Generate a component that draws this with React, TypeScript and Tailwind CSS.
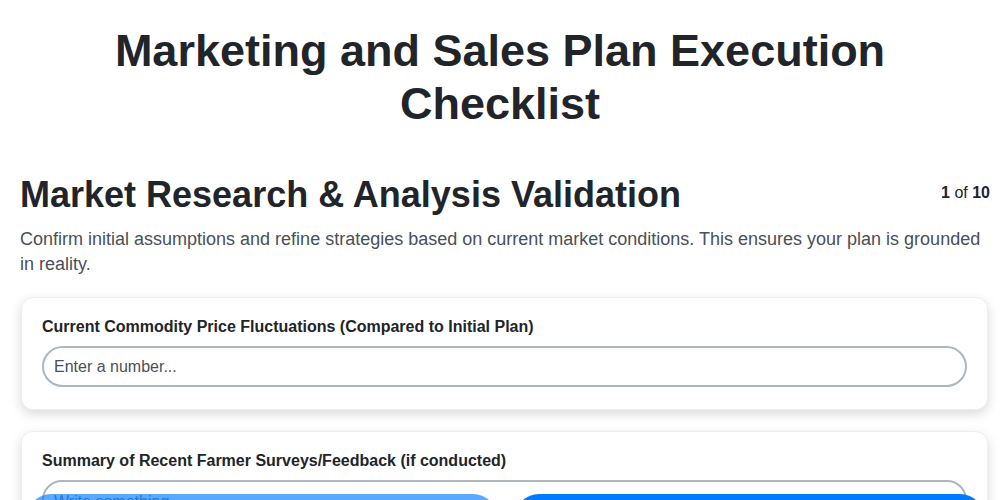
export default function App() {
  return (
    <div className="min-h-screen bg-white text-[#212529]" style={{ fontFamily: '"Liberation Sans", Arial, sans-serif' }}>
      <div className="pl-5 pr-[10px] pt-[24px] pb-24">
        <h1 className="mx-auto max-w-[800px] pr-[10px] text-center text-[45px] font-bold leading-[53px] text-[#212529]">
          Marketing and Sales Plan Execution Checklist
        </h1>

        <div className="mt-[43px] flex items-start justify-between">
          <h2 className="text-[36px] font-bold leading-[44px] text-[#212529]">Market Research &amp; Analysis Validation</h2>
          <div className="mt-[8px] text-[16px] text-[#212529]">
            <span className="font-bold">1</span> of <span className="font-bold">10</span>
          </div>
        </div>
        <p className="mt-[10px] text-[18px] leading-[25px] text-[#495057]">
          Confirm initial assumptions and refine strategies based on current market conditions. This ensures your plan is grounded in reality.
        </p>

        <div className="mt-[20px] mr-[2px] flex flex-col gap-[21px] pl-px">
          <div className="rounded-xl border border-[#eceef2] bg-white px-[20px] pt-[20px] pb-[22px] shadow-[0_4px_12px_rgba(0,0,0,0.15)]">
            <label className="block text-[16px] font-bold leading-[18px] text-[#212529]">
              Current Commodity Price Fluctuations (Compared to Initial Plan)
            </label>
            <input
              type="text"
              placeholder="Enter a number..."
              className="mt-[10px] block h-[41px] w-full rounded-full border-2 border-[#adb5bd] bg-white px-[10px] text-[16px] text-[#212529] outline-none placeholder:text-[#495057]"
            />
          </div>

          <div className="rounded-xl border border-[#eceef2] bg-white px-[20px] pt-[20px] pb-[22px] shadow-[0_4px_12px_rgba(0,0,0,0.15)]">
            <label className="block text-[16px] font-bold leading-[18px] text-[#212529]">
              Summary of Recent Farmer Surveys/Feedback (if conducted)
            </label>
            <textarea
              placeholder="Write something..."
              className="mt-[10px] block h-[100px] w-full resize-none rounded-[20px] border-2 border-[#adb5bd] bg-white px-[10px] py-[8px] text-[16px] text-[#212529] outline-none placeholder:text-[#6c757d]"
            />
          </div>
        </div>
      </div>

      <div className="fixed bottom-0 left-0 right-0 top-[494px] flex gap-[16px] pl-[26px] pr-[15px]">
        <button className="h-[50px] flex-1 rounded-full bg-[#007bff] text-[16px] font-bold text-white opacity-65">Previous</button>
        <button className="h-[50px] flex-1 rounded-full bg-[#007bff] text-[16px] font-bold text-white">Next</button>
      </div>
    </div>
  );
}
